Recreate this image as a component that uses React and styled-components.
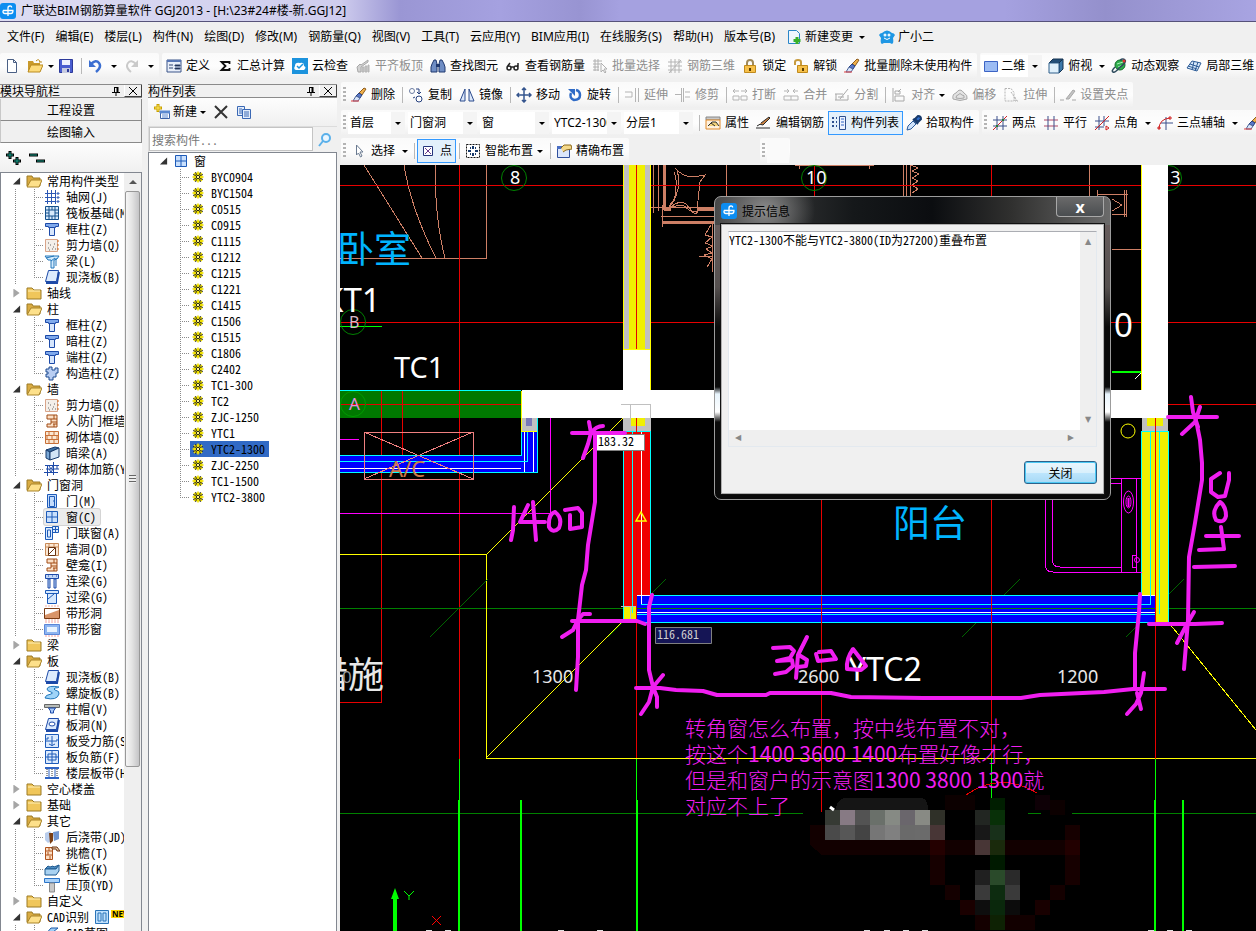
import styled, { createGlobalStyle, css } from "styled-components";

const ui = `"Noto Sans", "Noto Sans CJK SC", sans-serif`;
const song = `"Noto Sans CJK SC", "Liberation Mono", sans-serif`;

// 16x16 drawings, shared by the toolbars and the trees
const icons = {
  logo: (
    <>
      <rect width="16" height="16" rx="3" fill="#0d8df0" />
      <path d="M8 13V5q0-2 2-2t1.500 1.500M3 7.500h10.500M3 7.500v1q0 2 2 2h6q2 0 2-3" stroke="#fff" strokeWidth="1.300" fill="none" />
    </>
  ),
  file: <path d="M3.500 1.500h6l3 3v10h-9zM9.500 1.500v3h3" fill="#fff" stroke="#4a5f84" />,
  open: (
    <>
      <path d="M1 3h5l1 2h6v9H1z" fill="#c99a2c" />
      <path d="M1 14l3-7h12l-3 7z" fill="#fddb7a" stroke="#b98a1e" />
      <path d="M9 3q3-3 4 1M12 4h3" stroke="#b98a1e" fill="none" />
    </>
  ),
  save: (
    <>
      <path d="M1.500 1.500h13v13h-13z" fill="#4a5ed0" stroke="#2d3a9a" />
      <path d="M4 2h8v5H4z" fill="#eef1ff" />
      <path d="M4 10h8v5H4z" fill="#c7cbe0" />
      <path d="M9 11h2v3H9z" fill="#2d3a9a" />
    </>
  ),
  undo: (
    <>
      <path d="M4 6q5-5 8-1t-3 9" fill="none" stroke="#3c6fd1" strokeWidth="2.500" />
      <path d="M2 2v7h7z" fill="#3c6fd1" />
    </>
  ),
  redo: (
    <>
      <path d="M12 6Q7 1 4 5t3 9" fill="none" stroke="#cacaca" strokeWidth="2" />
      <path d="M14 2v7H7z" fill="#cacaca" />
    </>
  ),
  define: (
    <>
      <path d="M1 2h14v12H1z" fill="#e8eef9" stroke="#3b5488" />
      <path d="M1 2h14v2H1z" fill="#5776b5" />
      <path d="M3 7h4M3 10h4M9 7h5v1H9zM9 10h5v1H9z" stroke="#2e4472" />
    </>
  ),
  sum: <path d="M12.500 6V4H4.500l4 4-4 4h8v-2" fill="none" stroke="#111" strokeWidth="1.800" />,
  cloud: (
    <>
      <rect width="16" height="16" fill="#1c93dd" />
      <path d="M4 12q-3-1-1-4 0-4 5-3 4-1 4 3 3 1 0 4z" fill="#fff" />
      <path d="M5 8l2 2 4-4" stroke="#1c93dd" strokeWidth="1.500" fill="none" />
    </>
  ),
  slab: (
    <>
      <path d="M2 9l3-3 1 1 7-5v2L6 9v5H3z" fill="#d2d2d2" stroke="#a8a8a8" />
      <path d="M7 9h2v5H7zM10 8h2v6h-2zM13 7h1v7h-1z" fill="#c8c8c8" stroke="#b4b4b4" />
    </>
  ),
  find: (
    <>
      <path d="M2 6l2-4h2l1 4v8H1V9zM9 6l1-4h2l2 4 1 3v5H9z" fill="#6f8dc4" stroke="#21396f" />
      <path d="M6 6h4v3H6z" fill="#21396f" />
    </>
  ),
  glasses: <path d="M2 10a2 2 0 1 0 4 0 2 2 0 1 0-4 0M9 10a2 2 0 1 0 4 0 2 2 0 1 0-4 0M6 9h3M2 9l3-4M13 9V5" fill="none" stroke="#222" strokeWidth="1.500" />,
  pickGrey: <path d="M1 3h9M1 6h7M1 9h6M1 12h6M3 1v12M6 1v12M9 5v9l2-2 2 3 1-1-2-3h3z" fill="none" stroke="#b0b0b0" />,
  gridGrey: <path d="M1 4h14M1 8h14M1 12h14M4 1v14M8 1v14M12 1v14M2 15L14 2" fill="none" stroke="#b4b4b4" />,
  lock: (
    <>
      <path d="M5 8V5q0-3 3-3t3 3v3" fill="none" stroke="#a08a5a" strokeWidth="2" />
      <path d="M2.500 7.500h11v7h-11z" fill="#f6c04a" stroke="#c08a1c" />
      <path d="M8 10v3" stroke="#5c3d00" strokeWidth="2" />
    </>
  ),
  unlock: (
    <>
      <path d="M2 7V4q0-2 3-2t3 2v3" fill="none" stroke="#c79b3f" strokeWidth="2" />
      <path d="M4.500 7.500h10v7h-10z" fill="#f6c04a" stroke="#c08a1c" />
      <path d="M10 10v3" stroke="#5c3d00" strokeWidth="2" />
    </>
  ),
  brush: (
    <>
      <path d="M13 1l2 1-4 6-3-2z" fill="#f0b04a" stroke="#8d5b1c" />
      <path d="M8 6l3 2-2 3-4-2z" fill="#5a78c8" stroke="#26407e" />
      <path d="M5 9l4 2-2 3H2z" fill="#d9e5fa" stroke="#4b659b" />
      <path d="M0 14h8" stroke="#e04040" />
    </>
  ),
  rect: <path d="M1.500 3.500h13v10h-13z" fill="#9cbcf4" stroke="#3c63c4" />,
  cube: (
    <>
      <path d="M1 5l4-4h10l-4 4z" fill="#234f78" stroke="#143250" />
      <path d="M11 5l4-4v10l-4 4z" fill="#3c78aa" stroke="#143250" />
      <path d="M1 5h10v10H1z" fill="#dff0fb" stroke="#2e5f8a" />
    </>
  ),
  orbit: (
    <>
      <circle cx="9" cy="7" r="5" fill="#2fae4c" stroke="#146b2b" />
      <path d="M6 6l6-2M7 9l5-2" stroke="#a8efb8" />
      <path d="M4 9q-4 4-2 5t6-4q8-6 6-8t-5 0" fill="none" stroke="#2d4a5c" strokeWidth="1.500" />
      <circle cx="13" cy="3" r="1.500" fill="#e03030" />
    </>
  ),
  local: <path d="M1 10l5-7 9 2-4 8zM4 6l9 3M8 3.500L6 12M12 4l-3 9M2 8l9 3" fill="#d7e9fb" stroke="#2d5c96" />,
  newChange: (
    <>
      <path d="M2.500 1.500h8l3 3v10h-11z" fill="#eef6fe" stroke="#2a86c8" />
      <path d="M11 8v7M7.500 11.500h7" stroke="#37b02b" strokeWidth="3" />
    </>
  ),
  robot: (
    <>
      <path d="M0 6q1-2 3-2 5-5 10 0 2 0 3 2l-2 3q1 6-1 6l-2-1H5l-2 1q-2 0-1-6z" fill="#1f97e4" />
      <circle cx="6" cy="6" r="1.500" fill="#e8f6ff" />
      <circle cx="10" cy="6" r="1.500" fill="#e8f6ff" />
      <path d="M5 9q3 3 6 0" stroke="#fff" fill="none" />
    </>
  ),
  copy: (
    <>
      <circle cx="4" cy="4" r="2.500" fill="#fff" stroke="#6a7ba0" />
      <circle cx="11" cy="12" r="3" fill="#fff" stroke="#26407e" />
      <path d="M8 2h3v4M9 5l2 2 2-2M5 11l2-1" fill="none" stroke="#26407e" />
    </>
  ),
  mirror: <path d="M6 2v12H1zM10 2v12h5z" fill="#dce8fb" stroke="#2b4a8c" />,
  move: <path d="M8 1v14M1 8h14M6 3l2-2 2 2M6 13l2 2 2-2M3 6L1 8l2 2M13 6l2 2-2 2" fill="none" stroke="#35558e" strokeWidth="1.500" />,
  rotate: (
    <>
      <path d="M4 6q-2 5 3 7 6 0 6-5 0-4-4-5" fill="none" stroke="#2f6bc6" strokeWidth="2.500" />
      <path d="M1 2h7v7z" fill="#2f6bc6" />
    </>
  ),
  extend: <path d="M1 5h7M1 10h7M11.500 1v14M14.500 1v14M8 5v5" fill="none" stroke="#b4b4b4" />,
  trim: <path d="M0 7.500h6M10 5h5M10 10h5M8.500 1v14M6.500 1v14" fill="none" stroke="#b4b4b4" />,
  breakIt: <path d="M1 4h6M3 2L1 4l2 2M9 4h6M13 2l2 2-2 2M1 9h6v4H1zM9 9h6v4H9z" fill="none" stroke="#b4b4b4" />,
  merge: <path d="M1 4h5M4 2l2 2-2 2M15 4h-5M12 2l-2 2 2 2M1 9h14v4H1zM8 9v4" fill="none" stroke="#b4b4b4" />,
  split: <path d="M1 7h8M1 13h13V8M2 7v6M6 12l8-10M4 10h6" fill="none" stroke="#a8a8a8" />,
  align: <path d="M2 1v14M4 4h5v3H4zM4 9h9v5H4zM10 2l-3 3" fill="none" stroke="#a8a8a8" />,
  offset: <path d="M1 12q-1-5 3-6 4-6 8 0 4 2 3 6-7 3-14 0zM4 11q0-3 2-3 2-3 4 0 3 0 2 3-4 1-8 0" fill="#e3e3e3" stroke="#a8a8a8" />,
  stretch: <path d="M2 1.500h6l3 4V14H2zM8 5l6 9M12 10v4h3" fill="none" stroke="#b4b4b4" strokeDasharray="2 1" />,
  grip: <path d="M0 13h4M12 13h4M6 12l7-9 2 1-6 8z" fill="#c4c4c4" stroke="#a8a8a8" />,
  props: (
    <>
      <path d="M1 2h14v3H1z" fill="#c8c8c8" stroke="#888" />
      <path d="M1 5h14v9H1z" fill="#fff2df" stroke="#e08a2a" />
      <path d="M3 11l4-4h4l3 4M6 8l4 3" fill="#f2d27a" stroke="#333" />
    </>
  ),
  editBar: <path d="M0 13h14M1 11q3-3 6-1l7-7-1-1-8 6" fill="#c88040" stroke="#2a2a2a" />,
  listBar: (
    <>
      <path d="M1 3h2M1 7h2M1 11h2M5 3h1M5 7h1M5 11h1" stroke="#2d4f8e" strokeWidth="2" />
      <path d="M8.500 1.500h6v13h-6z" fill="#eef4ff" stroke="#2d4f8e" />
      <path d="M10 4h3M10 7h3M10 10h3" stroke="#2f64c4" />
    </>
  ),
  dropper: (
    <>
      <path d="M1 15l1-4 5-5 3 3-5 5z" fill="#cfe2fa" stroke="#2c5c9c" />
      <path d="M7 4l5 5M9 4l3-3q3 0 3 3l-3 3z" fill="#2f6fd0" stroke="#173a6c" strokeWidth="2" />
    </>
  ),
  twoPoint: (
    <>
      <path d="M1 5h14M1 11h14M5 1v14M11 1v14" stroke="#3a4f8a" fill="none" />
      <path d="M1 15L15 1" stroke="#d02020" />
      <path d="M4 10h2v2H4zM10 4h2v2h-2z" fill="#2a7a2a" />
    </>
  ),
  parallel: (
    <>
      <path d="M1 5h14M1 11h14" stroke="#b04868" fill="none" />
      <path d="M5 1v14M11 1v14" stroke="#3a4f8a" fill="none" />
    </>
  ),
  pointAngle: (
    <>
      <path d="M1 6h14M1 12h9M5 1v14M10 1v10" stroke="#3a4f8a" fill="none" />
      <path d="M1 15L15 1M12 11l3 2-3 2z" stroke="#d02020" fill="none" />
    </>
  ),
  threePoint: (
    <>
      <path d="M4 8h12M9 2v13" stroke="#3a4f8a" fill="none" />
      <path d="M2 14Q2 4 13 3M1 12h2v2H1zM12 2h2v2h-2z" stroke="#d02020" fill="none" />
    </>
  ),
  cursor: <path d="M5.500 2v10l2-2 2 4 1.500-1-2-4h3z" fill="#fff" stroke="#6a7a90" />,
  point: (
    <>
      <path d="M3.500 3.500h9v9h-9z" fill="#fff" stroke="#25357c" />
      <path d="M5 5l6 6M11 5l-6 6" stroke="#6a3c8c" />
    </>
  ),
  smart: (
    <>
      <path d="M1.500 1.500h13v13h-13z" fill="#fff" stroke="#111" strokeDasharray="2 1" />
      <path d="M8 3v3M8 10v3M3 8h3M10 8h3M5 5h1M10 5h1M5 11h1M10 11h1" stroke="#173a6c" strokeWidth="2" />
    </>
  ),
  exact: (
    <>
      <path d="M1.500 3.500h12v11h-12z" fill="#dbe6fb" stroke="#2f4f9c" />
      <path d="M1 3h13v3H1z" fill="#4a6fc4" />
      <path d="M5 5l3-3h7l1 4-6 1-3 2" fill="#f5d98a" stroke="#8d6a1c" />
    </>
  ),
  newItem: (
    <>
      <path d="M4 0v8M0 4h8" stroke="#c9a100" strokeWidth="3" />
      <path d="M4 1v6M1 4h6" stroke="#ffe860" />
      <path d="M6.500 7.500h9v7h-9z" fill="#fff" stroke="#3c63a8" />
      <path d="M6 7h10v2H6zM8 11h6M8 13h6" stroke="#5b88d0" fill="#5b88d0" />
    </>
  ),
  cross: <path d="M2 2l12 12M14 2L2 14" stroke="#333" strokeWidth="2" />,
  copies: (
    <>
      <path d="M1.500 2.500h7v9h-7z" fill="#e4eefc" stroke="#3a68b4" />
      <path d="M3 5h3M3 7h3M3 9h3" stroke="#3a68b4" />
      <path d="M6.500 5.500h8v9h-8z" fill="#e4eefc" stroke="#3a68b4" />
      <path d="M8 8h5M8 10h5M8 12h5" stroke="#3a68b4" />
    </>
  ),
  search: (
    <>
      <circle cx="9" cy="6" r="4" fill="#eaf6ff" stroke="#5ab0ea" strokeWidth="2" />
      <path d="M6 9l-4 5" stroke="#5ab0ea" strokeWidth="2" />
    </>
  ),
  expandAll: (
    <>
      <path d="M4 1v8M0 5h8M11 7v8M7 11h8" stroke="#000" strokeWidth="3" />
      <path d="M4 2v6M1 5h6M11 8v6M8 11h6" stroke="#16a08c" />
    </>
  ),
  collapseAll: (
    <>
      <path d="M0 5h9M7 11h9" stroke="#000" strokeWidth="3" />
      <path d="M1 5h7M8 11h7" stroke="#16a08c" />
    </>
  ),
  folder: (
    <>
      <path d="M1 3h5l2 2h7v9H1z" fill="#f0c65a" stroke="#9c7a24" />
      <path d="M2 6h12" stroke="#fff0b8" />
    </>
  ),
  folderOpen: (
    <>
      <path d="M1 3h5l1 2h7v8H1z" fill="#d9ab42" stroke="#9c7a24" />
      <path d="M1 14l4-7h11l-3 7z" fill="#fde08a" stroke="#a9842a" />
    </>
  ),
  axis: (
    <>
      <path d="M1 4.500h11M1 8.500h11M1 12.500h11M3.500 1v14M7.500 1v14M11.500 1v14" stroke="#2b57b4" fill="none" />
      <path d="M13 4h2v1h-2zM13 8h2v1h-2zM13 12h2v1h-2z" stroke="#2b57b4" fill="none" />
    </>
  ),
  raft: <path d="M1.500 1.500h13v13h-13zM5 5h6v6H5zM1 5h4M11 5h4M1 11h4M11 11h4M5 1v4M11 1v4M5 11v4M11 11v4M8 2v3M8 11v3M2 8h3M11 8h3" fill="#d6e9fb" stroke="#14508c" />,
  column: (
    <>
      <path d="M1.500 2.500h13v3h-3v1h-7v-1h-3z" fill="#7fa9ec" stroke="#1d4aa8" />
      <path d="M5.500 6.500h5v8h-5z" fill="#d7e6fc" stroke="#1d4aa8" />
    </>
  ),
  shearWall: (
    <>
      <path d="M1.500 2.500h12v12h-12z" fill="#f4efe9" stroke="#d9a58a" />
      <path d="M4 11h1M6 8h1M9 10h1M5 13h1M8 12h1M11 12h1M10 7h1M4 6h1" stroke="#666" />
      <path d="M13 4h2M13 8h2M13 12h2" stroke="#d06a1c" />
    </>
  ),
  beam: (
    <>
      <path d="M1 3h14l-2 3-3 1v8H7V7H4z" fill="#d3ebfd" stroke="#2277bb" />
      <path d="M2 5l8-2M7 8l4-3M12 5v8" stroke="#2277bb" />
    </>
  ),
  slabBlue: (
    <>
      <path d="M4.500 1.500h10l-2 11h-11z" fill="#dcebfd" stroke="#1d4aa8" />
      <path d="M2 14h11l2-11" fill="none" stroke="#1d4aa8" strokeWidth="2" />
    </>
  ),
  builtCol: <path d="M5 2h3v3h3V3h3v5h-2v4h-3v3H5v-3H2V9h2V7H2V4h3z" fill="#b8cdf2" stroke="#1d4a90" />,
  brickWall: (
    <>
      <path d="M3 2h10v12H3v-3h4V6H3z" fill="#fbe0c6" stroke="#a04a14" />
      <path d="M7 6h6M7 9h6M10 2v4M9 11h4M10 11v3" stroke="#a04a14" />
    </>
  ),
  bricks: <path d="M1.500 2.500h13v12h-13zM1 6.500h14M1 10.500h14M5 3v3M10 3v3M3 7v3M8 7v3M13 7v3M5 11v3M10 11v3" fill="#fbe7d2" stroke="#c87038" />,
  hiddenBeam: (
    <>
      <path d="M2 5l9-3 4 1-9 4z" fill="#3c6ea0" stroke="#173a6c" />
      <path d="M2 5l4 2v8l-4-2z" fill="#7aa8d6" stroke="#173a6c" />
      <path d="M6 7l9-4v9l-9 3z" fill="#d2e4f6" stroke="#173a6c" />
    </>
  ),
  rebar: <path d="M1 4.500h14M0 11.500h14M3.500 4v11M9.500 1v13M2 8h13M13 4v4M5 5l2 3 2-3M5 8l2 3 2-3" stroke="#1d4aa8" fill="none" />,
  door: <path d="M3.500 1.500h9v13h-9zM5.500 3.500h5v10h-5zM9 8h1" fill="#c4dcfc" stroke="#1d5ab8" />,
  window: <path d="M2.500 2.500h11v11h-11zM8 2v12M2 8h12" fill="#c9e0fd" stroke="#1d5ab8" />,
  doorWindow: <path d="M1.500 2.500h7v12h-7zM3.500 5h3v7h-3zM8.500 1.500h6v6h-6zM11.500 1v7M8 4.500h7" fill="#dcebfd" stroke="#1d5ab8" />,
  wallHole: (
    <>
      <path d="M1.500 2.500h13v12h-13zM1 6h14M5 3v3M10 3v3" fill="#fbe7d2" stroke="#c88a58" />
      <path d="M4.500 6.500h7v8h-7zM5 13l6-6" fill="#fff" stroke="#6a3410" />
    </>
  ),
  linkBeam: <path d="M1.500 1.500h13v4h-13zM4 6h2v9H4zM10 6h2v9h-2zM4 3h1M8 3h1M12 3h1" fill="#c3d9f8" stroke="#1d4aa8" />,
  overBeam: <path d="M1.500 1.500h13v3h-13zM3.500 4.500h9v10h-9zM4 10l6-5" fill="#d7e9fd" stroke="#1d5ab8" />,
  stripHole: (
    <>
      <path d="M.5 3.500h15v10H.5z" fill="#d89468" stroke="#7a3c14" />
      <path d="M1 10l14-5v-1H1z" fill="#fff" />
      <path d="M1 1h14M1 15h14" stroke="#f4b0a0" strokeDasharray="2 1" />
    </>
  ),
  stripWindow: (
    <>
      <path d="M.5 3.500h15v10H.5z" fill="#8db4f0" stroke="#5a86d8" />
      <path d="M3 6h10v5H3z" fill="#e8f3ff" />
      <path d="M1 1h14M1 15h14" stroke="#f4a0a0" strokeDasharray="2 1" />
    </>
  ),
  spiral: <path d="M15 2Q4 0 3 4q0 2 4 3 3 1 0 2-6 1-6 4 12 3 14-4 1-3-4-4-2-1 0-2 3 0 4-1z" fill="#9fd4f8" stroke="#2277bb" />,
  cap: (
    <>
      <path d="M.5 3.500h15v3H.5z" fill="#b8bcb8" stroke="#666" />
      <path d="M4.500 7h7l-2 3v2h-3v-2z" fill="#a9c9f8" stroke="#1d4aa8" />
    </>
  ),
  slabHole: (
    <>
      <path d="M4.500 1.500h10l-2 11h-11z" fill="#dcebfd" stroke="#1d4aa8" />
      <path d="M2 14h11l2-11" fill="none" stroke="#1d4aa8" strokeWidth="2" />
      <ellipse cx="8" cy="7" rx="3" ry="2" fill="#fff" stroke="#1d4aa8" />
    </>
  ),
  forceBar: <path d="M1.500 1.500h13v13h-13zM3 9V5h2M8 3v10M4 8h9v-2M5 11q3 3 6 0" fill="#dcebfd" stroke="#1d5ab8" />,
  negBar: <path d="M1.500 1.500h13v13h-13zM4 5v6M12 5v6M4 5h8M4 11h8M8 2v12M1 8h14" fill="#dcebfd" stroke="#1d5ab8" />,
  strip: (
    <>
      <path d="M1 3h14M1 13h14" stroke="#2f64c4" strokeWidth="2" />
      <path d="M5 4v8M11 4v8" stroke="#2f64c4" />
      <path d="M3 4v8M8 4v8M13 4v8" stroke="#333" strokeDasharray="1 1" />
    </>
  ),
  postPour: (
    <>
      <path d="M1 4l5-2 1 2v8l-3 2-3-3z" fill="#b9cdec" />
      <path d="M5 4h4v8l-3 3z" fill="#7a3f14" />
      <path d="M9 3l6-1v8l-5 2z" fill="#6f94cf" />
    </>
  ),
  eave: (
    <>
      <path d="M1.500 2.500h7v12h-7z" fill="#fbe0c6" stroke="#b0521c" />
      <path d="M2 6h6M2 10h6M5 3v3M4 7v3M6 11v3" stroke="#b0521c" />
      <path d="M8 2h5l3 4h-3l-1-2H8z" fill="#e8c8a8" stroke="#6a3410" />
    </>
  ),
  railing: (
    <>
      <path d="M1 8l3-3 2 1 3-1 1 1 5-2-3 4z" fill="#4f8fc4" stroke="#1f5a90" />
      <path d="M1 8h11l3-4v6l-3 4H1z" fill="#a9d2f2" stroke="#1f5a90" />
    </>
  ),
  coping: (
    <>
      <path d="M.5 1.500h15v4H.5z" fill="#a9d2fa" stroke="#2a74c8" />
      <path d="M5.500 6h5v9h-5z" fill="#c8c8c8" stroke="#8a8a8a" />
    </>
  ),
  gear: (
    <>
      <circle cx="8" cy="8" r="4.500" fill="#f2e200" />
      <path d="M8 2.500v11M2.500 8h11M4 4l8 8M12 4l-8 8" stroke="#f2e200" strokeWidth="1.500" />
      <path d="M5.500 3l1 3M10.500 3l-1 3M3 5.500l3 1M3 10.500l3-1M13 5.500l-3 1M13 10.500l-3-1M5.500 13l1-3M10.500 13l-1-3" stroke="#222" strokeWidth="0.900" />
      <circle cx="8" cy="8" r="1.700" fill="#fff68a" stroke="#222" />
    </>
  ),
  cadTable: <path d="M1.500 1.500h13v13h-13zM4 4h3v8H4zM9 4h3v8H9z" fill="#bfe0fc" stroke="#2a74b8" />,
  cadDraft: <path d="M1 10l6-7h7l-5 4v8H4v-5z" fill="#9fd0f8" stroke="#1d5aa8" />,
  pin: (
    <>
      <path d="M6.500 4v5M4 9.500h8M8 9v4M6 4.500h4" stroke="#000" fill="none" />
      <path d="M9.500 4v5" stroke="#000" strokeWidth="2" />
    </>
  ),
  close: <path d="M4 4l8 8M12 4l-8 8" stroke="#000" fill="none" />,
};

const Svg = styled.svg`
  flex: none;
  width: 16px;
  height: 16px;
`;

const Icon = ({ name }) => (
  <Svg viewBox="0 0 16 16" aria-hidden="true">
    {icons[name]}
  </Svg>
);

const GlobalStyle = createGlobalStyle`
  * { box-sizing: border-box; }
  body { margin: 0; background: #f0f0f0; font: 12px/16px ${ui}; color: #000; }
  button, select, input, textarea { font: inherit; color: inherit; margin: 0; padding: 0; border: 0; background: none; }
  ul { list-style: none; margin: 0; padding: 0; }
`;

const Page = styled.div`
  height: 100vh;
  display: flex;
  flex-direction: column;
  overflow: hidden;
`;

const TitleBar = styled.header`
  flex: none;
  height: 22px;
  display: flex;
  align-items: center;
  gap: 5px;
  background: linear-gradient(90deg, #dcdcf2 0, #cfcdee 340px, #9a96d4 400px, #a5a1e0 500px, #9894d2 580px, #a5a1e0 620px, #a5a1e0 80%, #9490cc 88%, #a8a4e2 100%);
  border-bottom: 1px solid #56527a;
  white-space: nowrap;
`;

const MenuBar = styled.nav`
  flex: none;
  height: 30px;
  padding-left: 7px;
  display: flex;
  align-items: center;
  gap: 11px;
  overflow: hidden;
  white-space: nowrap;
`;

const MenuItem = styled.button`
  display: flex;
  align-items: center;
  gap: 3px;
  height: 20px;
`;

const Bar = styled.div`
  flex: none;
  height: 28px;
  display: flex;
  align-items: center;
  gap: 3px;
  padding-left: ${(p) => p.$inset || 0}px;
  overflow: hidden;
  white-space: nowrap;
`;

const Group = styled.div`
  flex: none;
  height: 26px;
  display: flex;
  align-items: center;
  padding: 0 1px;
  border-radius: 2px;
  background: linear-gradient(#fafafa, #fdfdfd 50%, #efefef);
`;

const Spacer = styled.span`
  flex: 0 0 125px;
`;

const Blank = styled.span`
  width: 22px;
  height: 24px;
  background: #fafafa;
`;

const Grip = styled.span`
  flex: none;
  width: 3px;
  height: 16px;
  margin: 0 2px 0 1px;
  background: repeating-linear-gradient(#b4b4b4 0 2px, transparent 2px 4px);
`;

const Separator = styled.span`
  flex: none;
  width: 1px;
  height: 16px;
  margin: 0 2px 0 3px;
  background: #b8b8b8;
`;

const ToolButton = styled.button`
  flex: none;
  height: 24px;
  display: flex;
  align-items: center;
  gap: 4px;
  padding: 0 4px 0 3px;
  ${(p) =>
    p.disabled &&
    css`
      color: #8e8e8e;
    `}
  ${(p) =>
    p.$active &&
    css`
      background: #e3f0fb;
      outline: 1px solid #3399ff;
      outline-offset: -1px;
    `}
`;

const Arrow = styled.span`
  flex: none;
  width: 0;
  margin: 0 ${(p) => p.$space || 0}px;
  border: 3px solid transparent;
  border-top-color: #000;
  border-bottom: 0;
`;

const ComboBox = styled.label`
  flex: none;
  width: ${(p) => p.$width || 69}px;
  height: 22px;
  margin-right: 3px;
  display: flex;
  align-items: center;
  background: #fff;

  svg {
    margin-left: 2px;
  }
  select {
    flex: 1;
    min-width: 0;
    height: 20px;
    margin-left: 2px;
    appearance: none;
    outline: 0;
  }
`;

const ComboArrow = styled.span`
  width: 14px;
  height: 22px;
  display: grid;
  place-items: center;
  background: #f4f4f4;
`;

const Combo = ({ label, value, width, icon }) => (
  <ComboBox $width={width}>
    {icon && <Icon name={icon} />}
    <select aria-label={label}>
      <option>{value}</option>
    </select>
    <ComboArrow>
      <Arrow />
    </ComboArrow>
  </ComboBox>
);

const Tool = ({ icon, text, arrow, ...rest }) => (
  <ToolButton aria-label={text || icon} {...rest}>
    {icon && <Icon name={icon} />}
    {text}
    {arrow && <Arrow />}
  </ToolButton>
);

const Work = styled.div`
  flex: 1;
  min-height: 0;
  display: flex;
  padding-top: 1px;
`;

const Dock = styled.aside`
  flex: none;
  width: ${(p) => p.$width}px;
  padding-top: 3px;
  margin-right: ${(p) => p.$gap}px;
  display: flex;
  flex-direction: column;
  font-family: ${song};
  font-feature-settings: "hwid";
`;

const DockHead = styled.div`
  flex: none;
  height: 14px;
  display: flex;
  align-items: center;
  border-top: 1px solid #8a8a8a;
  border-bottom: 1px solid #8a8a8a;
  line-height: 12px;

  span {
    flex: 1;
  }
  button {
    height: 12px;
    display: flex;
    align-items: center;
  }
  button:last-child {
    border-right: 1px solid #404040;
    border-bottom: 1px solid #404040;
    border-left: 1px solid #fff;
  }
`;

const DockTab = styled.button`
  flex: none;
  height: 22px;
  border-bottom: 1px solid #8a8a8a;
  border-left: 1px solid #c8c8c8;
  border-right: 1px solid #8a8a8a;

  &:first-of-type {
    margin-top: 1px;
  }
`;

const DockTools = styled.div`
  flex: none;
  height: ${(p) => p.$height}px;
  display: flex;
  align-items: center;
  gap: 7px;
  padding-left: 6px;
  background: linear-gradient(#fdfdfd, #f0f0f0);
  font-family: ${ui};
  font-feature-settings: normal;

  button {
    display: flex;
    align-items: center;
    gap: 3px;
  }
`;

const TreePane = styled.div`
  flex: 1;
  min-height: 0;
  display: flex;
  overflow: hidden;
  background: #fff;
  border: 1px solid #828790;
  border-bottom: 0;
`;

const Tree = styled.ul`
  flex: 1;
  min-width: 0;
  overflow: hidden;
  white-space: nowrap;
`;

const dots = (deg) => `repeating-linear-gradient(${deg}deg, #8a8a8a 0 1px, transparent 1px 2px)`;

const Branch = styled.button`
  height: 16px;
  display: flex;
  align-items: center;
  padding-left: ${(p) => p.$inset}px;
`;

const BranchLabel = styled.span`
  margin: 0 5px;
`;

const Expander = styled.span`
  flex: none;
  width: 9px;
  height: 9px;
  clip-path: ${(p) => (p.$open ? "polygon(90% 10%, 90% 90%, 10% 90%)" : "polygon(15% 0, 85% 50%, 15% 100%)")};
  background: ${(p) => (p.$open ? "#333" : "#a6a6a6")};
  margin-right: 5px;
`;

const Children = styled.ul`
  margin-left: ${(p) => p.$inset}px;
  padding-left: ${(p) => p.$pad}px;
  background: ${(p) => (p.$guide ? dots(180) : "none")} 0 0 / 1px 100% no-repeat;
`;

const Leaf = styled.button`
  height: 16px;
  display: flex;
  align-items: center;

  &::before {
    content: "";
    width: ${(p) => p.$twig}px;
    height: 16px;
    background:
      ${dots(90)} 0 8px / 100% 1px no-repeat,
      ${dots(180)} 0 0 / 1px ${(p) => (p.$last ? "8px" : "100%")} no-repeat;
  }
`;

const LeafBody = styled.span`
  display: flex;
  align-items: center;
  gap: ${(p) => p.$gap}px;
  height: 16px;
  padding-right: 4px;
  ${(p) => p.$hover && "background: #ececec; box-shadow: 0 0 0 1px #d4d4d4; border-radius: 2px;"}
  ${(p) => p.$selected && "background: #316ac5;"}
`;

const NewTag = styled.span`
  margin: -6px 0 0 1px;
  padding: 0 1px;
  background: #ffd800;
  font: bold 8px/8px ${ui};
`;

const ScrollTrack = styled.div`
  flex: none;
  width: 17px;
  display: flex;
  flex-direction: column;
  align-items: center;
  background: #efefef;
`;

const ScrollArrow = styled.span`
  width: 0;
  margin: 7px 0;
  border: 4px solid transparent;
  border-bottom: 4px solid #555;
  border-top: 0;
`;

const ScrollThumb = styled.div`
  width: 15px;
  height: 76%;
  display: grid;
  place-items: center;
  border: 1px solid #989898;
  border-radius: 2px;
  background: linear-gradient(90deg, #f6f6f6, #e4e4e4 45%, #c4c4c6);

  &::after {
    content: "";
    width: 7px;
    height: 8px;
    background: repeating-linear-gradient(#666 0 1px, #eee 1px 3px);
  }
`;

const SearchRow = styled.form`
  flex: none;
  height: 26px;
  display: flex;
  border: 1px solid #dcdcdc;
  border-width: 1px 0 0 1px;

  input {
    flex: 1;
    min-width: 0;
    height: 24px;
    padding-left: 2px;
    background: #fff;
    border: 1px solid #c4c4c4;
    outline: 0;
  }
  input::placeholder {
    color: #777;
    opacity: 1;
  }
  button {
    width: 24px;
    display: grid;
    place-items: center;
  }
`;

const Main = styled.main`
  flex: 1;
  min-width: 0;
  display: flex;
  flex-direction: column;
`;

const Canvas = styled.div`
  position: relative;
  flex: 1;
  min-height: 0;
  overflow: hidden;
  background: #000;

  > svg {
    display: block;
    width: 100%;
    height: 100%;
  }
`;

const Dialog = styled.section`
  position: absolute;
  left: 374px;
  top: 31px;
  width: 397px;
  height: 304px;
  display: flex;
  flex-direction: column;
  padding: 0 6px 5px;
  border: 1px solid #9c9c9c;
  border-radius: 7px;
  background:
    radial-gradient(ellipse at 50px 13px, #8c8c8c 0, transparent 50px),
    linear-gradient(90deg, #484848, #15181a 35%, #0b0d10 55%, #30302f 75%, #6a6a6a) 0 0 / 100% 28px no-repeat,
    linear-gradient(#6e6262, #55504f 90px, #0a0a0a 130px, #0a0a0a 190px, #e8f4fc 197px, #fff 215px, #0a0a0a 225px);
`;

const DialogTitle = styled.div`
  flex: none;
  height: 27px;
  display: flex;
  align-items: center;
  gap: 5px;
  font-family: ${song};

  > span {
    flex: 1;
    line-height: 14px;
  }
  button {
    align-self: flex-start;
    width: 48px;
    height: 20px;
    border: 1px solid #a8a8a8;
    border-top: 0;
    border-radius: 0 0 4px 4px;
    background: linear-gradient(#6a6a6a, #4a4d50);
    color: #fff;
    font: bold 16px/14px ${ui};
  }
`;

const DialogBody = styled.div`
  flex: 1;
  display: flex;
  flex-direction: column;
  align-items: flex-end;
  gap: 14px;
  padding: 6px 6px 9px;
  border: 1px solid #b0b0b0;
  outline: 1px solid #111;
  background: #f0f0f0;
`;

const MessageBox = styled.div`
  align-self: stretch;
  flex: 1;
  display: grid;
  grid-template: 1fr 16px / 1fr 16px;
  border: 1px solid #e3e9ef;
  border-top-color: #abadb3;
  background: #fff;

  textarea {
    resize: none;
    outline: 0;
    overflow: hidden;
    padding: 1px 0;
    font: 12px/14px ${song};
    font-feature-settings: "hwid";
    white-space: pre;
  }
`;

const MiniScroll = styled.div`
  display: flex;
  flex-direction: ${(p) => (p.$across ? "row" : "column")};
  justify-content: space-between;
  align-items: center;
  padding: ${(p) => (p.$across ? "0 6px" : "6px 0")};
  background: #efefef;
  color: #888;
  font: 8px/8px "DejaVu Sans", sans-serif;
`;

const CloseButton = styled.button`
  width: 73px;
  height: 23px;
  border: 1px solid #2c628b;
  border-radius: 3px;
  box-shadow: inset 0 0 0 1px #4cc9f4;
  background: linear-gradient(#eaf6fd, #d9f0fc 50%, #bee6fd 50%, #a7d9f5);
  font-family: ${song};
`;

const topTools = [
  ["define", "定义"],
  ["sum", "汇总计算"],
  ["cloud", "云检查"],
  ["slab", "平齐板顶", true],
  ["find", "查找图元"],
  ["glasses", "查看钢筋量"],
  ["pickGrey", "批量选择", true],
  ["gridGrey", "钢筋三维", true],
  ["lock", "锁定"],
  ["unlock", "解锁"],
  ["brush", "批量删除未使用构件"],
];

const editTools = [
  ["brush", "删除"],
  null,
  ["copy", "复制"],
  ["mirror", "镜像"],
  null,
  ["move", "移动"],
  ["rotate", "旋转"],
  null,
  ["extend", "延伸", true],
  ["trim", "修剪", true],
  null,
  ["breakIt", "打断", true],
  ["merge", "合并", true],
  ["split", "分割", true],
  null,
  ["align", "对齐", true, true],
  ["offset", "偏移", true],
  ["stretch", "拉伸", true],
  null,
  ["grip", "设置夹点", true],
];

const menus = [
  "文件(F)", "编辑(E)", "楼层(L)", "构件(N)", "绘图(D)", "修改(M)", "钢筋量(Q)",
  "视图(V)", "工具(T)", "云应用(Y)", "BIM应用(I)", "在线服务(S)", "帮助(H)", "版本号(B)",
];

const modules = [
  ["常用构件类型", [["axis", "轴网(J)"], ["raft", "筏板基础(M)"], ["column", "框柱(Z)"], ["shearWall", "剪力墙(Q)"], ["beam", "梁(L)"], ["slabBlue", "现浇板(B)"]]],
  ["轴线"],
  ["柱", [["column", "框柱(Z)"], ["column", "暗柱(Z)"], ["column", "端柱(Z)"], ["builtCol", "构造柱(Z)"]]],
  ["墙", [["shearWall", "剪力墙(Q)"], ["brickWall", "人防门框墙"], ["bricks", "砌体墙(Q)"], ["hiddenBeam", "暗梁(A)"], ["rebar", "砌体加筋(Y)"]]],
  ["门窗洞", [["door", "门(M)"], ["window", "窗(C)"], ["doorWindow", "门联窗(A)"], ["wallHole", "墙洞(D)"], ["brickWall", "壁龛(I)"], ["linkBeam", "连梁(G)"], ["overBeam", "过梁(G)"], ["stripHole", "带形洞"], ["stripWindow", "带形窗"]]],
  ["梁"],
  ["板", [["slabBlue", "现浇板(B)"], ["spiral", "螺旋板(B)"], ["cap", "柱帽(V)"], ["slabHole", "板洞(N)"], ["forceBar", "板受力筋(S)"], ["negBar", "板负筋(F)"], ["strip", "楼层板带(H)"]]],
  ["空心楼盖"],
  ["基础"],
  ["其它", [["postPour", "后浇带(JD)"], ["eave", "挑檐(T)"], ["railing", "栏板(K)"], ["coping", "压顶(YD)"]]],
  ["自定义"],
  ["CAD识别", [["cadDraft", "CAD草图"]]],
];

const parts = [
  "BYC0904", "BYC1504", "C0515", "C0915", "C1115", "C1212", "C1215", "C1221", "C1415", "C1506", "C1515",
  "C1806", "C2402", "TC1-300", "TC2", "ZJC-1250", "YTC1", "YTC2-1300", "ZJC-2250", "TC1-1500", "YTC2-3800",
];

// x, y, colour of every 15px block of the blurred seal
const mosaic = [
  [825, 810, "#363a34"], [840, 810, "#877a84"], [855, 810, "#535353"], [870, 810, "#6a706a"], [885, 810, "#868a84"], [900, 810, "#6a666c"], [915, 810, "#888a84"], [930, 810, "#2f3028"],
  [825, 825, "#4a4a4a"], [840, 825, "#575757"], [855, 825, "#444"], [870, 825, "#767676"], [885, 825, "#808080"], [900, 825, "#6a6a6a"], [915, 825, "#6b6b6b"], [930, 825, "#483636"],
  [930, 840, "#240000"], [930, 855, "#160000"], [930, 870, "#160000"], [945, 885, "#140000"], [960, 900, "#1a0000"], [975, 915, "#140000"], [1005, 915, "#120000"], [1020, 915, "#120000"],
  [1065, 825, "#160000"], [1065, 840, "#220000"], [1065, 855, "#160000"], [1065, 870, "#160000"], [1050, 885, "#140000"], [1035, 900, "#180000"],
  [945, 795, "#0c0000"], [960, 795, "#0c0000"], [1035, 795, "#0e0006"], [1050, 800, "#0c0000"],
  [975, 810, "#222622"], [975, 825, "#181818"], [975, 840, "#483636"], [975, 870, "#202020"], [975, 885, "#3a3a3a"], [975, 900, "#0e0e0e"],
  [990, 798, "#001e00"], [990, 810, "#083008"], [990, 825, "#18301a"], [990, 840, "#1a2a0c"], [990, 855, "#001a00"], [990, 870, "#2a4a2a"], [990, 885, "#0d2c10"], [990, 900, "#0a280c"], [990, 915, "#0e2204"],
  [1005, 870, "#2a2a2a"], [1005, 885, "#3a3a3a"], [1005, 900, "#0c0c0c"],
];

const Plan = () => (
  <svg fontFamily={ui} fill="none" role="img" aria-label="平面图">
    <g transform="translate(-340 -165)">
      <g shapeRendering="crispEdges">
        {/* furniture */}
        <g stroke="#cd7f65">
          <path d="M486.500 165v93.500H340M364 165l58 93M404 165q7 44 32 93M435 165q0 55 10 93" />
          <path d="M653.500 165v48M658.500 165v46M650 207.500h65M726.500 165v31M795 165.500h79M799.500 165v4M869.500 165v4M903.500 165v31M906.500 165v31M910.500 165v31M1089.500 165v31" />
          <path d="M664 165v45" strokeWidth="3" />
          <path d="M664 209h7M697 209h17M662 222h52" strokeWidth="3" />
          <path d="M662.500 205v22M661 216.500h53M712.500 222v50M699 256.500h14" />
          <path d="M675 168q8 9 18 9l12-2-5 7-3 28M677 170q4 14 0 22-2 10-8 15l14-2 6 5 7 4 3-4M674 172q4 10 1 18 2 8-6 16M672 206q8-6 14-2l6 7 6 1" />
          <path d="M711 225l-6 10 7 2-7 6 8 3-7 3 6 4-8 2 8 4-5 8M911 165l7 3-6 3 7 3-7 4 6 3-6 4 6 4-6 4" />
          <path d="M1097 194.500h31M1097.500 190v7M1124.500 190v27M1112 214.500h14M1126 217V190M1112 199l10 6-10 6M1112 249.500h29" />
        </g>
        {/* axis grid */}
        <path d="M340 185.500h916M340 322.500h916M340 404.500h916M459.500 165v594M636.500 165v594M821.500 480v332M991.500 480v279M814.500 165v31M991.500 165v31" stroke="#e80000" />
        <path d="M381.500 418v284H340" stroke="#e80000" />
        <path d="M340 608.500h916M340 813.500h463M1028 813.500h13M1072 813.500h184" stroke="#008000" />
        <path d="M459.500 759v41M636.500 759v41M991.500 759v39M1155.500 759v41" stroke="#0f0" />
        <path d="M459 800v131M521 800v131M637 800v131M1155 800v131M1183 800v131M1112 372h29" stroke="#0f0" strokeWidth="2" />
        <path d="M340 326.500h42" stroke="#0f0" />
        <path d="M1135 379l6-6" stroke="#fff" />
        {/* outer outline */}
        <path d="M623 418L486.500 554.500H340M486.500 554v204.500H1256M486 758l150-150M1169 623l87 107" stroke="#ff0" />
        <path d="M550.500 418v95.500H340M340 439.500h19" stroke="#f0f" />
      </g>
      <path d="M430 637l58-58M608 637l58-58M962 637l58-58M1126 637l58-58" stroke="#006400" />
      <g stroke="#008000">
        <circle cx="514" cy="178" r="12.500" />
        <circle cx="814" cy="178" r="12.500" />
        <circle cx="1169" cy="178" r="12.500" />
        <circle cx="353" cy="322" r="12.500" />
      </g>
      <g fill="#fff">
        <text x="510" y="184" fontSize="18">8</text>
        <text x="806" y="184" fontSize="18">10</text>
        <text x="1160" y="184" fontSize="18">13</text>
        <text x="323" y="312" fontSize="33">KT1</text>
        <text x="394" y="378" fontSize="29">TC1</text>
        <text x="1114" y="337" fontSize="33">0</text>
      </g>
      <text x="349" y="328" fontSize="16" fill="#d8b8c8">B</text>
      <g fill="#00b4ff" fontSize="37">
        <text x="337" y="263">卧室</text>
        <text x="893" y="537">阳台</text>
      </g>

      <g shapeRendering="crispEdges">
        {/* green wall and the left window */}
        <path d="M340 391h181v27H340z" fill="#007800" />
        <path d="M340 390.500h181" stroke="#0ff" />
        <path d="M340 404.500h181M381.500 391v27M402.500 391v66M459.500 391v27" stroke="#e80000" />
        <path d="M340 455h198v18H340z" fill="#00f" />
        <path d="M521 418h16v13h-16z" fill="#c0c0c0" />
        <path d="M526 418h6v8h-6z" fill="#7878b8" />
        <path d="M521 431h16v41h-16z" fill="#00f" />
        <path d="M340 468.500h181M524.500 432v40M533.500 432v40" stroke="#fff" />
        <path d="M340 455.500h181v-24M340 461.500h187v-30M340 472.500h197.500V418" stroke="#0ff" />
        <path d="M521.500 391v40.500H537" stroke="#ff0" />
        <path d="M364.500 432.500h109v47h-109zM364 432l109 47M473 432l-109 47" stroke="#f08080" />
        {/* white walls */}
        <path d="M623 165h28v184h-28z" fill="#c0c0c0" />
        <path d="M629 165h16v184h-16z" fill="#f0f000" />
        <path d="M623.500 165v184.500h27M650.500 165v225M1141.500 165v225" stroke="#ff0" />
        <path d="M623 350h27v68h-27zM522 390h646v28H522zM1142 165h26v253h-26z" fill="#fff" />
        <path d="M636.500 165v184" stroke="#e80000" />
        {/* left wall, selected */}
        <path d="M623 418h28v13h-28z" fill="#c0c0c0" />
        <path d="M631 418h14v8h-14z" fill="#f0f000" />
        <path d="M621 404.500h29.500v27M630.500 404v22" stroke="#c0c0c0" />
        <path d="M636 595h520v28H636z" fill="#00f" />
        <path d="M623 431h28v164h-15v11h-13z" fill="#f00000" />
        <path d="M623 606h13v16h-13z" fill="#f0f000" />
        <path d="M641.500 431v173.500M636 595.500h15M636 612.500h519M1142 595.500h14" stroke="#fff" />
        <path d="M623.500 431v191M632.500 431v182M623 431.500h27.500V595M651 595.500h490M641 604.500h510M636 614.500h523.500V431M636 622.500h532.500V431" stroke="#0ff" />
        <path d="M621 606.500h15M630.500 606v14" stroke="#c0c0c0" />
        <path d="M636 608.500h520" stroke="#008000" />
        <path d="M636.500 418v204" stroke="#e80000" />
        {/* right wall */}
        <path d="M1142 418h26v13h-26z" fill="#c0c0c0" />
        <path d="M1147 418h16v8h-16z" fill="#f0f000" />
        <path d="M1142 431h26v164h-26zM1156 595h12v27h-12z" fill="#f0f000" />
        <path d="M1141.500 595V431.500h27V622M1150.500 431v173M1159.500 431v183" stroke="#0ff" />
        <path d="M1155.500 418v341M821.500 596v27M991.500 596v27" stroke="#e80000" />
        {/* washer */}
        <path d="M1045.500 498v67q0 7 7 7h89M1052.500 498v62q0 7 7 7h62M1121.500 478v94M1136.500 478v94M1111 478.500h30M1111 483.500h10M1136 555h-4v12h5" stroke="#f0f" />
      </g>
      <path d="M641 512l-5 9h10z" stroke="#ff0" strokeWidth="1.500" />
      <g stroke="#f0f">
        <ellipse cx="1128.500" cy="502" rx="5" ry="11" />
        <ellipse cx="1128.500" cy="502" rx="2.500" ry="6" />
        <path d="M1128.500 498v9" strokeWidth="2" />
        <circle cx="1137" cy="560" r="2.500" />
      </g>
      <circle cx="1128" cy="431" r="7" stroke="#ff0" />
      <circle cx="353" cy="404" r="12.500" stroke="#009a00" />
      <text x="349" y="410" fontSize="17" fill="#e090e0">A</text>
      <text x="389" y="477" fontSize="22" fill="#cd7848">A/C</text>
      <g fill="#e8e8e8">
        <text x="312" y="688" fontSize="36">措施</text>
        <text x="342" y="683" fontSize="17" fill="#999">0</text>
        <g fontSize="18">
          <text x="532" y="683">1300</text>
          <text x="798" y="683">2600</text>
          <text x="1057" y="683">1200</text>
        </g>
        <text x="848" y="681" fontSize="32" fill="#fff">YTC2</text>
      </g>

      {/* value boxes beside the cursor */}
      <g fontFamily={song} fontSize="12" style={{ fontFeatureSettings: '"hwid"' }}>
        <path d="M596.500 434.500h48v16h-48z" fill="#fff" stroke="#808080" />
        <text x="598" y="446" fill="#000">183.32</text>
        <path d="M655.500 627.500h56v16h-56z" fill="#151555" stroke="#808080" />
        <text x="657" y="639" fill="#d0d0d0">116.681</text>
      </g>

      {/* seal */}
      <g shapeRendering="crispEdges">
        <path d="M835 810q3-12 10-12h75q8 0 8 12z" fill="#151515" />
        <path d="M810 825h15v15h240v15H822l-12-10z" fill="#120000" />
        {mosaic.map(([x, y, fill]) => (
          <rect key={`${x}-${y}`} x={x} y={y} width="15" height="15" fill={fill} />
        ))}
        <path d="M966 795q34-24 71-2" stroke="#e80000" />
      </g>
      <path d="M830 807l4 3" stroke="#fff" strokeWidth="3" />

      {/* origin marker */}
      <path d="M395 888l4 11h-2v32h-4v-32h-2z" fill="#0f0" />
      <path d="M404 891l5 5 5-5M409 896v4" stroke="#0f0" />
      <path d="M432 916l9 9M441 916l-9 9" stroke="#f00" />
      <path d="M426 930.500h6M445 930.500h6M558 930.500h6M597 930.500h6M864 930.500h6M884 930.500h6M903 930.500h6M922 930.500h6M1148 930.500h6M1167 930.500h6M1186 930.500h6" stroke="#ddd" />

      {/* hand-drawn dimensions */}
      <g stroke="#f01ef0" strokeWidth="4" strokeLinecap="round" strokeLinejoin="round">
        <path d="M589 422l2 11-3 11-5 14M591 433q5-7 12-7M572 433h53M595 434v68l-7 43-2 25-4 15-4 35v37l-2 33" />
        <path d="M562 637l11-7 5-10 5-6h7M572 621h65l8 3" />
        <path d="M514 507l-1 23-2 10M528 505l-8 17h25M533 502l3 38M555 512q-7 2-6 15 4 7 10 1 4-10-4-16M565 510l13-2 4 5v14l-12 2v-14" />
        <path d="M652 595l-3 12v63l4 17-4 15-8 12M663 675l-10 12 4 10v10M636 688h24l16 2 27 1 14 4h49l4-2h61l20 4 72 1h98l19-3 64-3 29-3h32" />
        <path d="M1140 594l-1 18-4 41v36M1144 673l-3 20-5 11-9 10M1137 693l4 16" />
        <path d="M1168 417h49M1191 397l2 15 5 15M1200 407l-5 15-13 12M1197 425l3 15 2 23v17l-7 43-6 34-1 63-4 49" />
        <path d="M1149 624h46l27-1M1194 612l-7 12-10 19" />
        <path d="M1220 473l-9 6v13l7 5 7-1 4-16v-7M1220 502q-9 9-4 18 8 4 10-4 0-10-6-14M1221 527l3 22-25 1M1206 536h33M1194 567l41-1" />
        <path d="M773 648l17-1 4 4-4 7-13 3 15-1 1 6-7 6-11 2M807 637l-9 18-2 23M799 655l8 5-1 6-8 1M819 652l12-1 5 8-18 2-2-7M853 649q-7 10-6 20l14 1 5-4z" />
      </g>
      <g fill="#f01ef0" fontFamily={song} fontSize="21" fontWeight="300">
        <text x="685" y="736">转角窗怎么布置，按中线布置不对，</text>
        <text x="685" y="762">
          按这个<tspan fontWeight="400">1400 3600 1400</tspan>布置好像才行，
        </text>
        <text x="685" y="788">
          但是和窗户的示意图<tspan fontWeight="400">1300 3800 1300</tspan>就
        </text>
        <text x="685" y="814">对应不上了</text>
      </g>
    </g>
  </svg>
);

const ModuleNav = () => (
  <Dock $width={142} $gap={6}>
    <DockHead>
      <span>模块导航栏</span>
      <button aria-label="固定"><Icon name="pin" /></button>
      <button aria-label="关闭导航栏"><Icon name="close" /></button>
    </DockHead>
    <DockTab>工程设置</DockTab>
    <DockTab>绘图输入</DockTab>
    <DockTools $height={29}>
      <button aria-label="全部展开"><Icon name="expandAll" /></button>
      <button aria-label="全部折叠"><Icon name="collapseAll" /></button>
    </DockTools>
    <TreePane>
      <Tree>
        {modules.map(([title, items]) => (
          <li key={title}>
            <Branch $inset={11}>
              <Expander $open={!!items} />
              <Icon name={items ? "folderOpen" : "folder"} />
              <BranchLabel>{title}</BranchLabel>
              {title === "CAD识别" && (
                <>
                  <Icon name="cadTable" />
                  <NewTag>NEW</NewTag>
                </>
              )}
            </Branch>
            {items && (
              <Children $inset={14} $pad={19} $guide>
                {items.map(([icon, text], i) => (
                  <li key={text}>
                    <Leaf $twig={10} $last={i === items.length - 1}>
                      <LeafBody $gap={6} $hover={text === "窗(C)"}>
                        <Icon name={icon} />
                        {text}
                      </LeafBody>
                    </Leaf>
                  </li>
                ))}
              </Children>
            )}
          </li>
        ))}
      </Tree>
      <ScrollTrack>
        <ScrollArrow />
        <ScrollThumb />
      </ScrollTrack>
    </TreePane>
  </Dock>
);

const PartList = () => (
  <Dock $width={189} $gap={3}>
    <DockHead>
      <span>构件列表</span>
      <button aria-label="固定"><Icon name="pin" /></button>
      <button aria-label="关闭列表"><Icon name="close" /></button>
    </DockHead>
    <DockTools $height={28}>
      <button>
        <Icon name="newItem" />
        新建
        <Arrow />
      </button>
      <button aria-label="删除构件"><Icon name="cross" /></button>
      <button aria-label="复制构件"><Icon name="copies" /></button>
    </DockTools>
    <SearchRow>
      <input aria-label="搜索构件" placeholder="搜索构件..." />
      <button type="button" aria-label="搜索"><Icon name="search" /></button>
    </SearchRow>
    <TreePane>
      <Tree>
        <li>
          <Branch $inset={10}>
            <Expander $open />
            <Icon name="window" />
            <BranchLabel>窗</BranchLabel>
          </Branch>
          <Children $inset={31} $pad={0}>
            {parts.map((name, i) => (
              <li key={name}>
                <Leaf $twig={10} $last={i === parts.length - 1}>
                  <LeafBody $gap={5} $selected={name === "YTC2-1300"}>
                    <Icon name="gear" />
                    {name}
                  </LeafBody>
                </Leaf>
              </li>
            ))}
          </Children>
        </li>
      </Tree>
    </TreePane>
  </Dock>
);

const MessageDialog = () => (
  <Dialog role="dialog" aria-label="提示信息">
    <DialogTitle>
      <Icon name="logo" />
      <span>提示信息</span>
      <button aria-label="关闭对话框">x</button>
    </DialogTitle>
    <DialogBody>
      <MessageBox>
        <textarea aria-label="提示内容" readOnly value="YTC2-1300不能与YTC2-3800(ID为27200)重叠布置" />
        <MiniScroll>
          <span>▲</span>
          <span>▼</span>
        </MiniScroll>
        <MiniScroll $across>
          <span>◀</span>
          <span>▶</span>
        </MiniScroll>
        <MiniScroll />
      </MessageBox>
      <CloseButton>关闭</CloseButton>
    </DialogBody>
  </Dialog>
);

export default function App() {
  return (
    <Page>
      <GlobalStyle />
      <TitleBar>
        <Icon name="logo" />
        {"广联达BIM钢筋算量软件 GGJ2013 - [H:\\23#24#楼-新.GGJ12]"}
      </TitleBar>
      <MenuBar>
        {menus.map((m) => (
          <MenuItem key={m}>{m}</MenuItem>
        ))}
        <MenuItem>
          <Icon name="newChange" />
          新建变更
          <Arrow $space={3} />
        </MenuItem>
        <MenuItem>
          <Icon name="robot" />
          广小二
        </MenuItem>
      </MenuBar>
      <Bar>
        <Group>
          <Tool icon="file" />
          <Tool icon="open" />
          <Arrow $space={1} />
          <Tool icon="save" />
          <Separator />
          <Tool icon="undo" />
          <Arrow $space={4} />
          <Tool icon="redo" disabled />
          <Arrow $space={4} />
        </Group>
        <Group>
          {topTools.map(([icon, text, off]) => (
            <Tool key={text} icon={icon} text={text} disabled={off} />
          ))}
        </Group>
        <Group>
          <Combo label="视图维度" value="二维" width={61} icon="rect" />
          <Tool icon="cube" text="俯视" />
          <Arrow $space={3} />
          <Tool icon="orbit" text="动态观察" />
          <Tool icon="local" text="局部三维" />
        </Group>
      </Bar>
      <Work>
        <ModuleNav />
        <PartList />
        <Main>
          <Bar $inset={1}>
            <Group>
              <Grip />
              {editTools.map((t, i) =>
                t ? <Tool key={t[1]} icon={t[0]} text={t[1]} disabled={t[2]} arrow={t[3]} /> : <Separator key={i} />
              )}
            </Group>
          </Bar>
          <Bar $inset={1}>
            <Group>
              <Grip />
              <Combo label="楼层" value="首层" width={57} />
              <Combo label="构件类型" value="门窗洞" />
              <Combo label="构件种类" value="窗" />
              <Combo label="构件名称" value="YTC2-1300" />
              <Combo label="分层" value="分层1" />
              <Separator />
              <Tool icon="props" text="属性" />
              <Tool icon="editBar" text="编辑钢筋" />
              <Tool icon="listBar" text="构件列表" $active />
              <Tool icon="dropper" text="拾取构件" />
            </Group>
            <Group>
              <Grip />
              <Tool icon="twoPoint" text="两点" />
              <Tool icon="parallel" text="平行" />
              <Tool icon="pointAngle" text="点角" />
              <Arrow $space={3} />
              <Tool icon="threePoint" text="三点辅轴" />
              <Arrow $space={3} />
              <Tool icon="brush" />
            </Group>
          </Bar>
          <Bar $inset={1}>
            <Group>
              <Grip />
              <Tool icon="cursor" text="选择" />
              <Arrow $space={3} />
              <Separator />
              <Tool icon="point" text="点" $active />
              <Separator />
              <Tool icon="smart" text="智能布置" arrow />
              <Separator />
              <Tool icon="exact" text="精确布置" />
            </Group>
            <Spacer />
            <Group>
              <Grip />
              <Blank />
            </Group>
          </Bar>
          <Canvas>
            <Plan />
            <MessageDialog />
          </Canvas>
        </Main>
      </Work>
    </Page>
  );
}
